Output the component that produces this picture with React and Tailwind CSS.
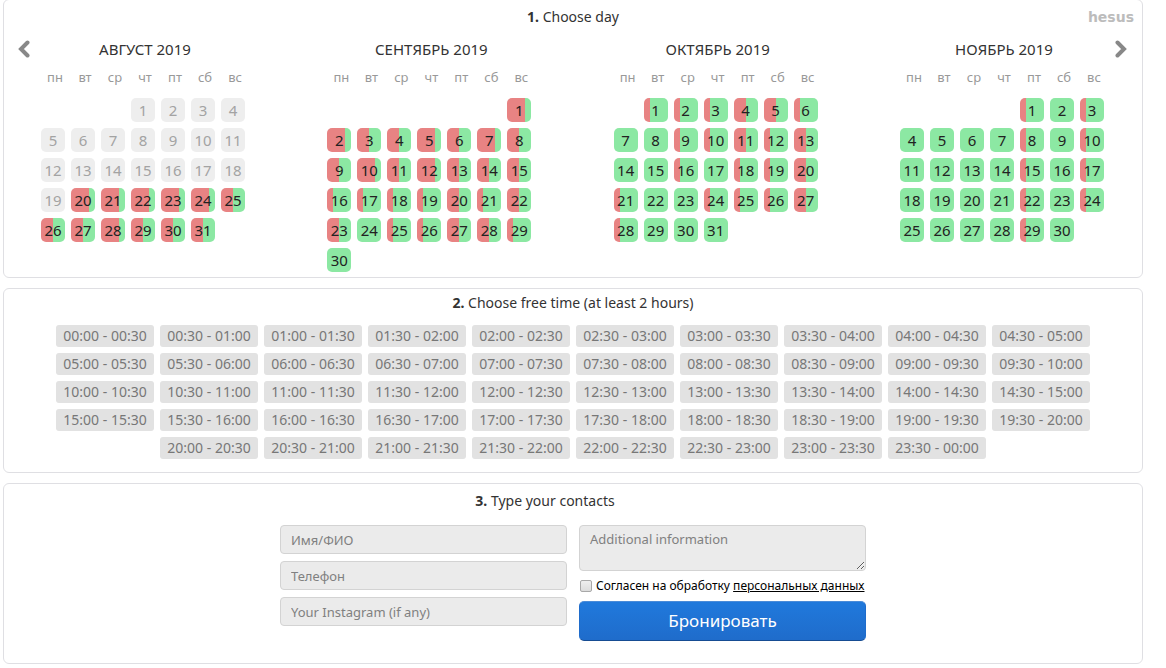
import React, { useState } from 'react';

const WEEKDAYS = ['пн', 'вт', 'ср', 'чт', 'пт', 'сб', 'вс'];

// load: how many quarters of the day are booked, one digit per day ("-" is a past day)
const MONTHS = [
  { title: 'АВГУСТ 2019', offset: 3, load: '-------------------333332223222' },
  { title: 'СЕНТЯБРЬ 2019', offset: 6, load: '332232322323222111121220112210' },
  { title: 'ОКТЯБРЬ 2019', offset: 1, load: '1112210011212001011210011121000' },
  { title: 'НОЯБРЬ 2019', offset: 4, load: '101000010100001010000101000010' },
];

const LOAD_STYLES = {
  '-': 'bg-[#eeeeee] text-[#a3a3a3]',
  0: 'bg-[#8ce8a3] text-[#222222]',
  1: 'bg-linear-to-r from-[#e88383] from-25% to-[#8ce8a3] to-25% text-[#222222]',
  2: 'bg-linear-to-r from-[#e88383] from-50% to-[#8ce8a3] to-50% text-[#222222]',
  3: 'bg-linear-to-r from-[#e88383] from-75% to-[#8ce8a3] to-75% text-[#222222]',
};

const formatTime = (halfHours) => {
  const hours = String(Math.floor(halfHours / 2) % 24).padStart(2, '0');
  return `${hours}:${halfHours % 2 ? '30' : '00'}`;
};

const SLOTS = Array.from({ length: 48 }, (_, i) => `${formatTime(i)} - ${formatTime(i + 1)}`);

const getWeeks = ({ offset, load }) => {
  const cells = [...Array(offset).fill(null), ...load.split('').map((_, i) => i + 1)];
  while (cells.length % 7) cells.push(null);
  const weeks = [];
  for (let i = 0; i < cells.length; i += 7) weeks.push(cells.slice(i, i + 7));
  return weeks;
};

const Panel = ({ children, className = '' }) => (
  <section className={`rounded-md border border-[#dfdfe3] bg-white ${className}`}>{children}</section>
);

const Month = ({ month }) => (
  <table className="w-[210px] table-fixed border-collapse">
    <caption className="h-8 text-[15px] leading-8 text-[#333333]">{month.title}</caption>
    <thead>
      <tr>
        {WEEKDAYS.map((day) => (
          <th key={day} className="h-[30px] p-0 text-center align-top text-[13px] leading-6 font-normal text-[#999999]">
            {day}
          </th>
        ))}
      </tr>
    </thead>
    <tbody>
      {getWeeks(month).map((week, row) => (
        <tr key={row}>
          {week.map((day, col) => (
            <td key={col} className="h-[30px] p-0 pl-px align-middle">
              {day && (
                <button
                  type="button"
                  disabled={month.load[day - 1] === '-'}
                  className={`block size-6 rounded-[5px] text-center text-[15px] leading-6 ${LOAD_STYLES[month.load[day - 1]]}`}
                >
                  {day}
                </button>
              )}
            </td>
          ))}
        </tr>
      ))}
    </tbody>
  </table>
);

const Arrow = ({ direction }) => (
  <svg viewBox="0 0 12 18" className="h-[18px] w-3" fill="none" stroke="#888888" strokeWidth="4" strokeLinecap="round">
    <path d={direction === 'left' ? 'M9.5 2.5 3 9l6.500 6.500' : 'M2.500 2.500 9 9l-6.500 6.500'} />
  </svg>
);

const inputStyles =
  'block w-full rounded border border-[#d3d3d3] bg-[#ebebeb] px-2.5 text-[13px] text-[#333333] placeholder:text-[#808080]';

const App = () => {
  const [agreed, setAgreed] = useState(false);

  return (
    <main className="mr-[23px] ml-[3px] space-y-2.5 pb-1 font-['Noto_Sans','Open_Sans',sans-serif] text-[#333333]">
      {/* Day */}
      <Panel className="-mt-px pb-0.5">
        <header className="grid h-[33px] grid-cols-3 items-center px-2">
          <h2 className="col-start-2 text-center text-sm">
            <b>1.</b> Choose day
          </h2>
          <a href="#hesus" className="justify-self-end font-['DejaVu_Sans',sans-serif] text-sm font-bold text-[#bcbcbc]">
            hesus
          </a>
        </header>
        <div className="flex items-start">
          <button type="button" aria-label="Previous months" className="h-8 w-9 shrink-0 pl-3.5">
            <Arrow direction="left" />
          </button>
          <div className="flex grow items-start justify-between">
            {MONTHS.map((month) => (
              <Month key={month.title} month={month} />
            ))}
          </div>
          <button type="button" aria-label="Next months" className="h-8 w-[33px] shrink-0 pl-1.5">
            <Arrow direction="right" />
          </button>
        </div>
      </Panel>

      {/* Time */}
      <Panel className="pb-[13px]">
        <h2 className="h-9 pt-1 text-center text-sm">
          <b>2.</b> Choose free time (at least 2 hours)
        </h2>
        <div className="flex flex-wrap justify-center gap-1.5 px-[50px]">
          {SLOTS.map((slot) => (
            <button
              key={slot}
              type="button"
              className="h-[22px] w-[98px] rounded-[3px] bg-[#e2e2e2] text-sm leading-[22px] text-[#777777]"
            >
              {slot}
            </button>
          ))}
        </div>
      </Panel>

      {/* Contacts */}
      <Panel className="pb-[22px]">
        <h2 className="h-[41px] pt-[7px] pr-14 text-center text-sm">
          <b>3.</b> Type your contacts
        </h2>
        <form className="mx-auto grid max-w-[586px] grid-cols-2 gap-3" onSubmit={(e) => e.preventDefault()}>
          <div className="space-y-[7px]">
            <input type="text" aria-label="Имя/ФИО" placeholder="Имя/ФИО" className={`h-[29px] ${inputStyles}`} />
            <input type="tel" aria-label="Телефон" placeholder="Телефон" className={`h-[29px] ${inputStyles}`} />
            <input
              type="text"
              aria-label="Your Instagram (if any)"
              placeholder="Your Instagram (if any)"
              className={`h-[29px] ${inputStyles}`}
            />
          </div>
          <div>
            <textarea
              aria-label="Additional information"
              placeholder="Additional information"
              className={`h-[46px] resize py-1 ${inputStyles}`}
            />
            <div className="flex h-[30px] items-center gap-1 text-xs whitespace-nowrap text-black">
              <input
                id="agree"
                type="checkbox"
                checked={agreed}
                onChange={(e) => setAgreed(e.target.checked)}
                className="ml-px size-3 shrink-0 appearance-none rounded-xs border border-[#a8a8a8] bg-linear-to-b from-[#eeeeee] to-[#dcdcdc] checked:bg-[#2079dc]"
              />
              <label htmlFor="agree">
                Согласен на обработку{' '}
                <a href="#personal-data" className="underline">
                  персональных данных
                </a>
              </label>
            </div>
            <button
              type="submit"
              className="block h-10 w-full rounded-[5px] border border-t-[#4a8bd8] border-r-[#1f6ccb] border-b-[#164c92] border-l-[#1f6ccb] bg-linear-to-b from-[#2079dc] to-[#1f6ccb] text-[17px] text-white"
            >
              Бронировать
            </button>
          </div>
        </form>
      </Panel>
    </main>
  );
};

export default App;
